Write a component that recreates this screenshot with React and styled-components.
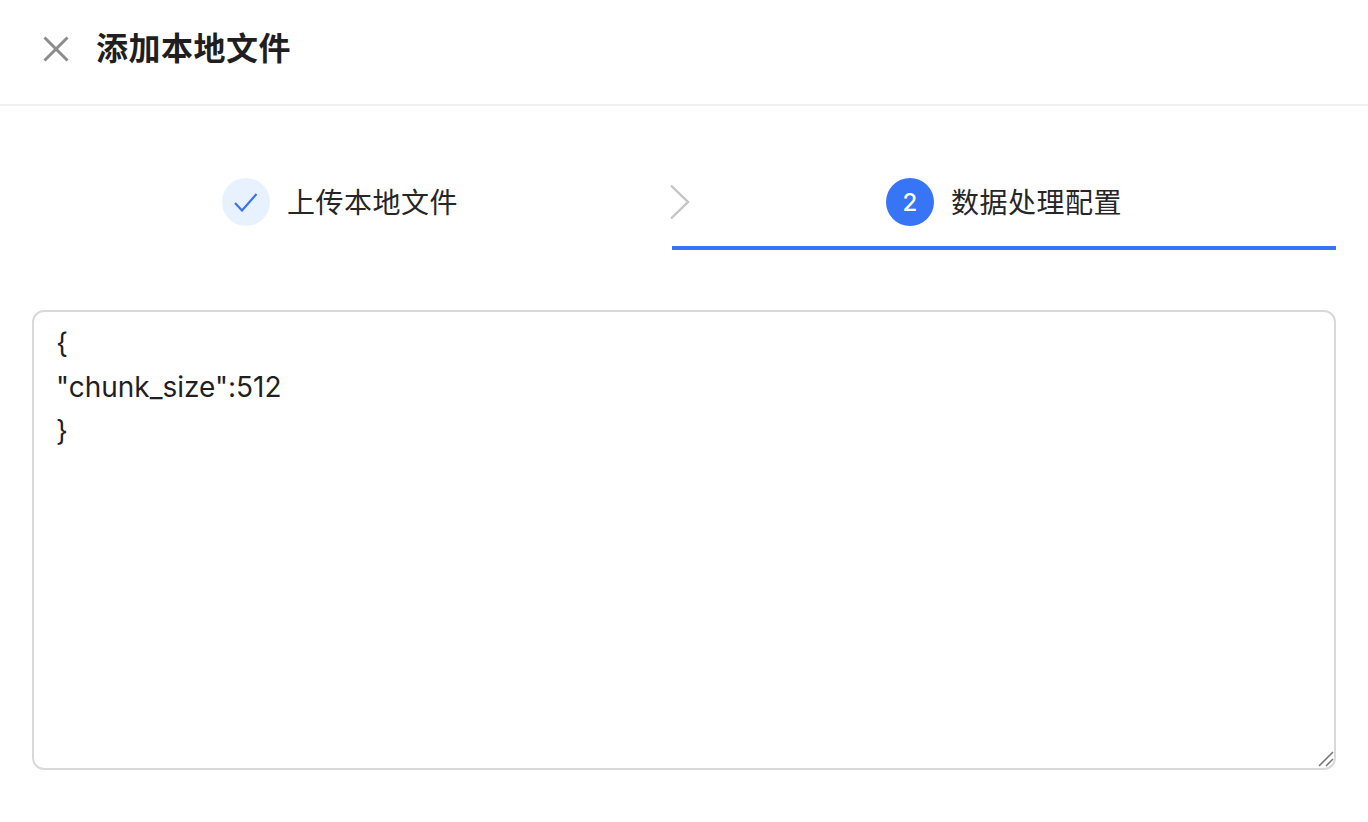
import styled, { createGlobalStyle } from "styled-components";

const GlobalStyle = createGlobalStyle`
  html, body {
    margin: 0;
    height: 100%;
    background: #fff;
  }
  body {
    font-family: "Inter", "Noto Sans CJK SC", sans-serif;
    color: #1f1f1f;
  }
`;

export default function App() {
  return (
    <>
      <GlobalStyle />
      <Page>
        <Header>
          <CloseButton aria-label="close">
            <svg width="28" height="28" viewBox="0 0 28 28" fill="none" stroke="#8c8c8c" strokeWidth="3">
              <path d="M2.5 2.5 25.5 25.5M25.5 2.5 2.5 25.5" />
            </svg>
          </CloseButton>
          <Title>添加本地文件</Title>
        </Header>
        <Steps>
          <Step>
            <StepDot $done>
              <svg width="26" height="20" viewBox="0 0 26 20" fill="none" stroke="#3874f6" strokeWidth="2.2">
                <path d="M2 11 9 18.5 23.5 2" />
              </svg>
            </StepDot>
            <StepLabel>上传本地文件</StepLabel>
          </Step>
          <Step $active>
            <Chevron width="20" height="36" viewBox="0 0 20 36" fill="none" stroke="#c4c4c4" strokeWidth="2.4">
              <path d="M1 1.5 18 18 1 34.5" />
            </Chevron>
            <StepDot>2</StepDot>
            <StepLabel>数据处理配置</StepLabel>
          </Step>
        </Steps>
        <EditorWrap>
          <Editor spellCheck={false} defaultValue={'{\n"chunk_size":512\n}'} />
          <ResizeGrip width="16" height="16" viewBox="0 0 16 16" fill="none" stroke="#777" strokeWidth="1.6">
            <path d="M1 15 15 1M8 15 15 8" />
          </ResizeGrip>
        </EditorWrap>
      </Page>
    </>
  );
}

const Page = styled.div`
  display: flex;
  flex-direction: column;
  min-height: 822px;
  box-sizing: border-box;
`;

const Header = styled.header`
  display: flex;
  align-items: center;
  gap: 26px;
  height: 106px;
  box-sizing: border-box;
  padding: 0 0 6px 42px;
  border-bottom: 2px solid #f0f0f0;
`;

const CloseButton = styled.button`
  display: flex;
  width: 28px;
  height: 28px;
  padding: 0;
  border: 0;
  background: none;
`;

const Title = styled.h1`
  margin: 0;
  font-size: 32px;
  font-weight: 700;
  line-height: 44px;
  letter-spacing: 0.5px;
  color: #1f1f1f;
`;

const Steps = styled.div`
  display: grid;
  grid-template-columns: 1fr 1fr;
  height: 106px;
  margin-top: 50px;
  padding: 0 32px 0 8px;
`;

const Step = styled.div`
  position: relative;
  display: flex;
  align-items: flex-start;
  justify-content: center;
  gap: 17px;
  padding-top: 22px;
  box-sizing: border-box;
  height: 94px;
  border-bottom: 4px solid ${(p) => (p.$active ? "#3874f6" : "transparent")};
`;

const StepDot = styled.span`
  display: flex;
  align-items: center;
  justify-content: center;
  width: 48px;
  height: 48px;
  border-radius: 50%;
  font-size: 24px;
  font-weight: 500;
  color: #fff;
  background: ${(p) => (p.$done ? "#e8f2fe" : "#3874f6")};
`;

const StepLabel = styled.span`
  font-size: 28px;
  line-height: 50px;
  letter-spacing: 0.5px;
  color: #262626;
`;

const Chevron = styled.svg`
  position: absolute;
  left: -2px;
  top: 28px;
`;

const EditorWrap = styled.div`
  position: relative;
  width: 1304px;
  height: 460px;
  margin: 48px 0 0 32px;
`;

const Editor = styled.textarea`
  display: block;
  width: 100%;
  height: 100%;
  padding: 9px 22px;
  box-sizing: border-box;
  border: 2px solid #d9d9d9;
  border-radius: 12px;
  outline: none;
  resize: none;
  font-family: "Inter", sans-serif;
  font-size: 28px;
  font-feature-settings: "calt" 0;
  line-height: 44px;
  color: #1f1f1f;
  background: #fff;
`;

const ResizeGrip = styled.svg`
  position: absolute;
  right: 2px;
  bottom: 3px;
  pointer-events: none;
`;
